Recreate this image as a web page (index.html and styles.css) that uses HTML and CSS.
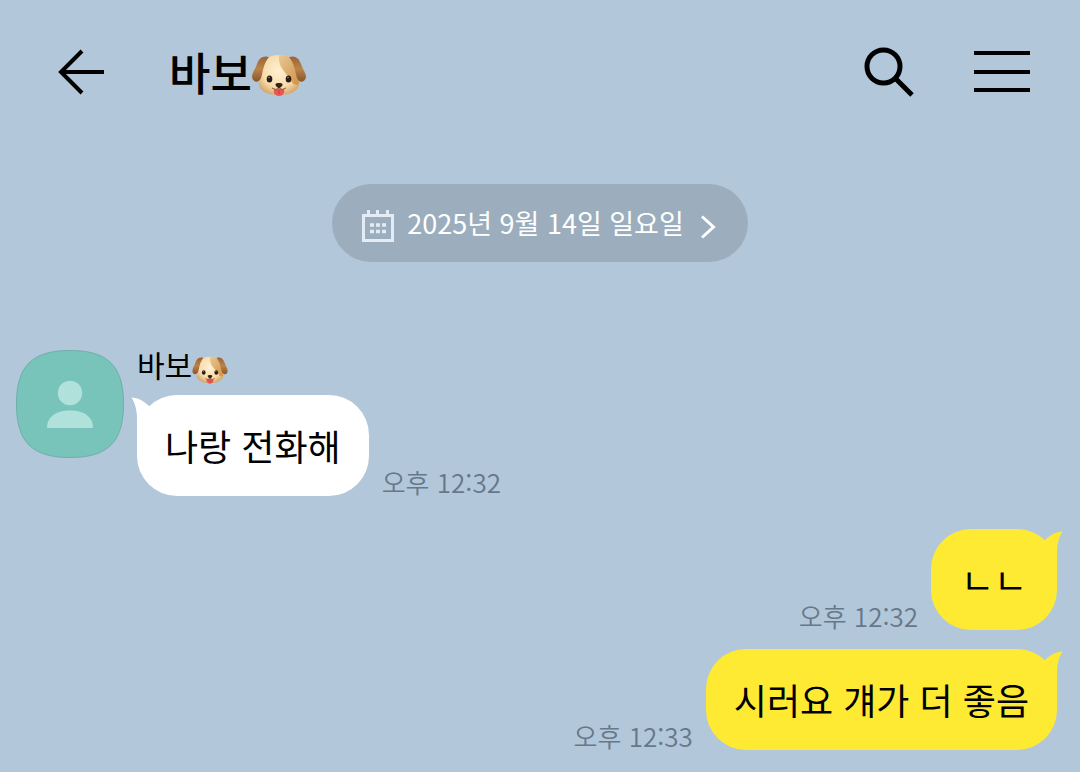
FILE: index.html
```html
<!DOCTYPE html>
<html lang="ko">
<head>
<meta charset="utf-8">
<meta name="viewport" content="width=device-width, initial-scale=1">
<title>바보</title>
<link rel="stylesheet" href="styles.css">
</head>
<body>
<svg class="defs" aria-hidden="true">
  <defs>
    <radialGradient id="fur" cx="50%" cy="40%" r="62%">
      <stop offset="0" stop-color="#fff0d2"/>
      <stop offset="0.65" stop-color="#f8dcae"/>
      <stop offset="1" stop-color="#d6a76b"/>
    </radialGradient>
    <linearGradient id="ear" x1="0" y1="0" x2="0" y2="1">
      <stop offset="0" stop-color="#9a6436"/>
      <stop offset="0.5" stop-color="#b98349"/>
      <stop offset="1" stop-color="#8a5529"/>
    </linearGradient>
    <linearGradient id="patch" x1="0" y1="0" x2="1" y2="1">
      <stop offset="0" stop-color="#e9c795"/>
      <stop offset="1" stop-color="#cf9447"/>
    </linearGradient>
    <symbol id="dog" viewBox="0 0 54 44">
      <path d="M27 1C40 1 45 8 46 19C47 25 49 32 44 36C40 40 33 41 27 41C21 41 14 40 10 36C5 32 7 25 8 19C9 8 14 1 27 1Z" fill="url(#fur)"/>
      <path d="M27 1C40 1 45 8 46 19C47 24 48 28 46 31C41 31 40 28 38 25C33 17 26 14 27 1Z" fill="url(#patch)"/>
      <path d="M17 3C11 1 7 4 5 10C3 16 0 19 0 23C1 29 7 29 9 24C11 18 11 10 17 3Z" fill="url(#ear)"/>
      <path d="M37 3C43 1 47 4 49 10C51 16 54 19 54 23C53 29 47 29 45 24C43 18 43 10 37 3Z" fill="url(#ear)"/>
      <ellipse cx="17.500" cy="25" rx="2.800" ry="3.500" fill="#2c1a10"/>
      <ellipse cx="36.500" cy="25" rx="2.800" ry="3.500" fill="#2c1a10"/>
      <circle cx="17" cy="23.500" r="0.800" fill="#a78d77"/>
      <circle cx="36" cy="23.500" r="0.800" fill="#a78d77"/>
      <path d="M22 35H32C33 39 31 42 27 42C23 42 21 39 22 35Z" fill="#ea5555"/>
      <path d="M20 34Q24 37 27 34Q30 37 34 34" fill="none" stroke="#8e5a34" stroke-width="1"/>
      <path d="M27 36V40" stroke="#c63c40" stroke-width="1"/>
      <path d="M23.500 30C24 28.500 30 28.500 30.500 30C31 32 28 34 27 34C26 34 23 32 23.500 30Z" fill="#3b2114"/>
    </symbol>
    <symbol id="tail" viewBox="0 0 36 40">
      <path d="M0.500 2.500C7 3 13 6 18 11L32 28L20 40H6V24C6 15 4 8 0.500 2.500Z"/>
    </symbol>
  </defs>
</svg>

<header class="topbar">
  <button class="icon-button" type="button" aria-label="뒤로">
    <svg class="icon-back" viewBox="0 0 48 48"><path d="M25 3L4 24L25 45M4 24H47"/></svg>
  </button>
  <h1 class="title">바보<svg class="dog-large" viewBox="0 0 54 44" role="img" aria-label="강아지"><use href="#dog"/></svg></h1>
  <button class="icon-button" type="button" aria-label="검색">
    <svg class="icon-search" viewBox="0 0 50 50"><circle cx="19.500" cy="19.500" r="16.500"/><path d="M31 31L48 48"/></svg>
  </button>
  <button class="icon-button" type="button" aria-label="메뉴">
    <svg class="icon-menu" viewBox="0 0 56 44"><path d="M0 3H56M0 22H56M0 40H56"/></svg>
  </button>
</header>

<main class="chat">
  <button class="date" type="button">
    <svg class="icon-calendar" viewBox="0 0 32 34">
      <path d="M1.500 5.500H30.500V30.500H1.500Z" fill="none" stroke="#e3ecf4" stroke-width="3"/>
      <path d="M6.500 0V6M15.500 0V6M25.500 0V6" stroke="#e3ecf4" stroke-width="3"/>
      <path d="M8 15H12M14 15H18M20 15H24M8 21.500H12M14 21.500H18M20 21.500H24" stroke="#e3ecf4" stroke-width="3.500"/>
    </svg>
    <span class="date-text">2025년 9월 14일 일요일</span>
    <svg class="icon-next" viewBox="0 0 16 24"><path d="M2 1.500L13.500 12L2 22.500"/></svg>
  </button>

  <section class="message received">
    <svg class="avatar" viewBox="0 0 108 108" role="img" aria-label="프로필">
      <path d="M54 0.500C92 0.500 107.500 16 107.500 54C107.500 92 92 107.500 54 107.500C16 107.500 0.500 92 0.500 54C0.500 16 16 0.500 54 0.500Z" fill="#79c4ba" stroke="#6cafab"/>
      <circle cx="54" cy="43" r="12.200" fill="#b0e2db"/>
      <path d="M31 78C31 66 41 60.500 54 60.500C67 60.500 77 66 77 78Z" fill="#b0e2db"/>
    </svg>
    <div class="content">
      <div class="sender">바보<svg class="dog-small" viewBox="0 0 54 44" role="img" aria-label="강아지"><use href="#dog"/></svg></div>
      <div class="line">
        <p class="bubble">나랑 전화해<svg class="tail" viewBox="0 0 36 40"><use href="#tail"/></svg></p>
        <time class="time">오후 12:32</time>
      </div>
    </div>
  </section>

  <section class="message sent">
    <time class="time">오후 12:32</time>
    <p class="bubble">ㄴㄴ<svg class="tail" viewBox="0 0 36 40"><use href="#tail"/></svg></p>
  </section>

  <section class="message sent">
    <time class="time">오후 12:33</time>
    <p class="bubble">시러요 걔가 더 좋음<svg class="tail" viewBox="0 0 36 40"><use href="#tail"/></svg></p>
  </section>
</main>
</body>
</html>
```
FILE: styles.css
```css
* {
  box-sizing: border-box;
}

body {
  margin: 0;
  min-height: 100vh;
  background: #b2c7da;
  color: #000;
  font-family: "Noto Sans CJK KR", sans-serif;
}

button {
  border: 0;
  padding: 0;
  background: none;
  color: inherit;
  font: inherit;
  cursor: pointer;
}

svg {
  display: block;
  flex: none;
}

.defs {
  position: absolute;
  width: 0;
  height: 0;
}

.topbar {
  display: flex;
  align-items: center;
  height: 144px;
  padding: 0 50px 0 57px;
}

.icon-button {
  flex: none;
}

.icon-back,
.icon-search,
.icon-menu,
.icon-next {
  fill: none;
  stroke: #000;
  stroke-width: 4;
}

.icon-back {
  width: 48px;
  height: 48px;
}

.icon-search {
  width: 50px;
  height: 50px;
  stroke-width: 5;
}

.icon-menu {
  width: 56px;
  height: 44px;
  margin-left: 60px;
}

.title {
  display: flex;
  align-items: center;
  flex: 1;
  margin: 0 0 0 64px;
  font-size: 45px;
  line-height: 64px;
  font-weight: 500;
}

.dog-large {
  width: 54px;
  height: 44px;
  margin-top: 8px;
}

.chat {
  display: flex;
  flex-direction: column;
  padding: 40px 16px 20px;
}

.date {
  display: flex;
  align-items: center;
  align-self: center;
  height: 78px;
  margin-bottom: 88px;
  padding: 0 32px 0 30px;
  border-radius: 39px;
  background: #9caebd;
  color: #fff;
}

.icon-calendar {
  width: 32px;
  height: 34px;
  margin: 8px 13px 0 0;
}

.date-text {
  font-size: 27px;
  line-height: 40px;
}

.icon-next {
  width: 16px;
  height: 24px;
  margin: 7px 0 0 16px;
  stroke: #fff;
  stroke-width: 3;
}

.message {
  display: flex;
}

.received {
  gap: 13px;
  margin-bottom: 33px;
}

.sent {
  justify-content: flex-end;
  align-items: flex-end;
  gap: 13px;
  padding-right: 7px;
}

.sent + .sent {
  margin-top: 19px;
}

.avatar {
  width: 108px;
  height: 108px;
}

.sender {
  display: flex;
  align-items: flex-start;
  margin-bottom: 10px;
  font-size: 30px;
  line-height: 28px;
}

.dog-small {
  width: 36px;
  height: 29px;
  margin-top: 6px;
}

.line {
  display: flex;
  align-items: flex-end;
  gap: 13px;
}

.bubble {
  position: relative;
  min-width: 126px;
  margin: 0;
  padding: 24px 28px;
  border-radius: 40px;
  background: #fff;
  font-size: 36px;
  line-height: 53px;
  text-align: center;
}

.sent .bubble {
  background: #ffea33;
}

.tail {
  position: absolute;
  top: 0;
  left: -6px;
  width: 36px;
  height: 40px;
  fill: #fff;
}

.sent .tail {
  right: -6px;
  left: auto;
  fill: #ffea33;
  transform: scaleX(-1);
}

.time {
  color: #66788a;
  font-size: 26px;
  font-weight: 350;
  line-height: 28px;
}
```
